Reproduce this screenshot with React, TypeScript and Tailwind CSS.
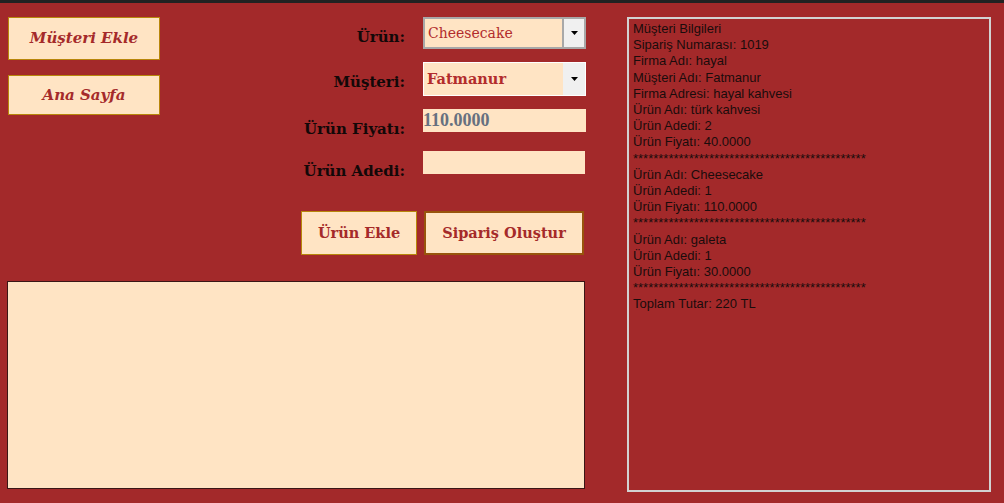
import React from 'react';

const serif = "font-['DejaVu_Serif','Liberation_Serif',serif]";
const times = "font-['Liberation_Serif','Times_New_Roman',serif]";

function Caret() {
  return (
    <svg width="7" height="4" viewBox="0 0 7 4">
      <path d="M0 0h7L3.5 4z" fill="#000" />
    </svg>
  );
}

function Combo({ value, focused }: { value: string; focused?: boolean }) {
  return (
    <div
      className={`flex h-full w-full bg-[#ffe4c4] ${
        focused ? 'border border-white' : 'border-2 border-[#a8a8a8]'
      }`}
    >
      <div
        className={`flex flex-1 items-center pl-[3px] text-[#b22c2c] ${serif} ${
          focused ? 'text-[14.5px] font-bold' : 'text-[14px]'
        }`}
      >
        {value}
      </div>
      <div
        className={`flex w-[22px] items-center justify-center bg-[#f0f0f0] ${
          focused ? '' : 'border-l-2 border-[#a8a8a8]'
        }`}
      >
        <Caret />
      </div>
    </div>
  );
}

function Row({ label, children, h }: { label: string; children: React.ReactNode; h: string }) {
  return (
    <div className="flex items-start">
      <div className={`w-[110px] pt-[10px] text-right text-[15px] leading-[20px] font-bold text-[#120808] ${serif}`}>
        {label}
      </div>
      <div className={`ml-[18px] w-[163px] ${h}`}>{children}</div>
    </div>
  );
}

const stars = '*'.repeat(46);

const receipt = [
  'Müşteri Bilgileri',
  'Sipariş Numarası: 1019',
  'Firma Adı: hayal',
  'Müşteri Adı: Fatmanur',
  'Firma Adresi: hayal kahvesi',
  'Ürün Adı: türk kahvesi',
  'Ürün Adedi: 2',
  'Ürün Fiyatı: 40.0000',
  stars,
  'Ürün Adı: Cheesecake',
  'Ürün Adedi: 1',
  'Ürün Fiyatı: 110.0000',
  stars,
  'Ürün Adı: galeta',
  'Ürün Adedi: 1',
  'Ürün Fiyatı: 30.0000',
  stars,
  'Toplam Tutar: 220 TL',
];

export default function App() {
  return (
    <div className="h-[503px] w-[1004px] overflow-hidden bg-[#a3292a]">
      <div className="h-[3px] bg-[#222222]" />
      <div className="flex pl-[7px] pt-[14px]">
        {/* left side: nav buttons, form, empty list box */}
        <div className="flex w-[579px] flex-col">
          <div className="flex">
            <div className="ml-px flex w-[152px] flex-col gap-[15px]">
              <button className={`h-[43px] border border-[#b8860b] bg-[#ffe4c4] text-[15px] font-bold italic text-[#a52a2a] ${serif}`}>
                Müşteri Ekle
              </button>
              <button className={`h-[40px] border border-[#b8860b] bg-[#ffe4c4] text-[15px] font-bold italic text-[#a52a2a] ${serif}`}>
                Ana Sayfa
              </button>
            </div>

            <div className="ml-[135px] flex flex-col">
              <Row label="Ürün:" h="h-[32px]">
                <Combo value="Cheesecake" />
              </Row>
              <div className="mt-[13px]">
                <Row label="Müşteri:" h="h-[34px]">
                  <Combo value="Fatmanur" focused />
                </Row>
              </div>
              <div className="mt-[13px]">
                <Row label="Ürün Fiyatı:" h="h-[23px]">
                  <div className={`flex h-full items-center bg-[#ffe4c4] text-[18px] font-bold text-[#66707f] ${times}`}>
                    110.0000
                  </div>
                </Row>
              </div>
              <div className="mt-[12px]">
                <Row label="Ürün Adedi:" h="h-[23px]">
                  <div className="h-full w-[162px] bg-[#ffe4c4]" />
                </Row>
              </div>
              <div className="ml-[6px] mt-[30px] flex gap-[7px]">
                <button className={`h-[44px] w-[116px] border border-[#b8860b] bg-[#ffe4c4] text-[14.5px] font-bold text-[#a52a2a] ${serif}`}>
                  Ürün Ekle
                </button>
                <button className={`h-[44px] w-[160px] border-2 border-[#98540c] bg-[#ffe4c4] text-[14.5px] font-bold text-[#a52a2a] ${serif}`}>
                  Sipariş Oluştur
                </button>
              </div>
            </div>
          </div>

          <div className="mt-[26px] h-[208px] w-[578px] border border-[#3a1616] bg-[#ffe4c4]" />
        </div>

        {/* right side: order summary */}
        <div className="ml-[41px] h-[475px] w-[364px] border-2 border-[#d2d2d2] pl-[4px] pt-[2px] font-['Liberation_Sans',Arial,sans-serif] text-[13px] leading-[16.2px] text-[#1a0c0c]">
          {receipt.map((line, i) => (
            <div key={i} className="whitespace-pre">
              {line}
            </div>
          ))}
        </div>
      </div>
    </div>
  );
}
